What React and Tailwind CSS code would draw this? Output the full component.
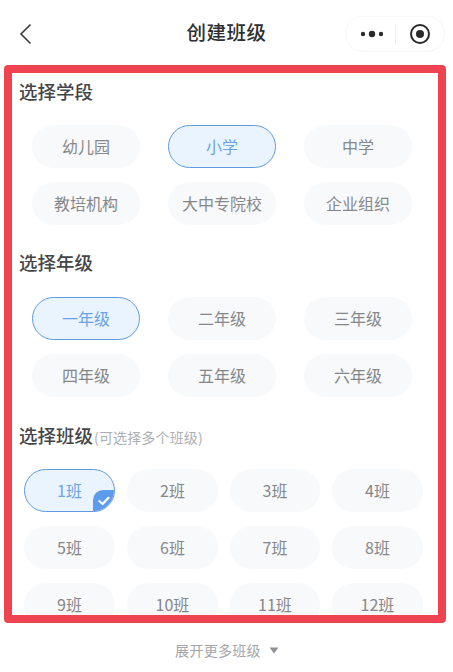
import React from "react";

const font = { fontFamily: '"Noto Sans CJK SC", "Noto Sans", sans-serif' };

function Chip({ label, active, check }) {
  return (
    <div
      className={`relative h-[43px] rounded-[22px] flex items-center justify-center text-[16px] overflow-hidden pb-[2px] ${
        active
          ? "bg-[#eaf4fe] border-[1.5px] border-[#5f9ae0] text-[#6ba3e2]"
          : "bg-[#f8f9fa] text-[#85878a]"
      }`}
    >
      {label}
      {check && (
        <div className="absolute right-0 bottom-0 w-[21px] h-[21px] bg-[#5d9ceb] rounded-tl-[10px] flex items-center justify-center">
          <svg width="12" height="10" viewBox="0 0 12 10" fill="none">
            <path d="M1.5 5.2 L4.6 8 L10.5 1.8" stroke="#fff" strokeWidth="2.2" strokeLinecap="round" strokeLinejoin="round" />
          </svg>
        </div>
      )}
    </div>
  );
}

function Title({ children, sub, className }) {
  return (
    <div className={`flex items-end h-[26px] pl-[7px] pb-[1px] ${className}`}>
      <span className="text-[18.5px] leading-[26px] font-medium text-[#444548]">{children}</span>
      {sub && <span className="ml-[1px] text-[14px] tracking-[0.15px] leading-[22px] text-[#adafb2]">{sub}</span>}
    </div>
  );
}

function Grid3({ items, active }) {
  return (
    <div className="grid grid-cols-[108px_108px_108px] gap-x-[28px] gap-y-[14px] pl-[20px]">
      {items.map((t) => (
        <Chip key={t} label={t} active={t === active} />
      ))}
    </div>
  );
}

export default function App() {
  const classes = Array.from({ length: 12 }, (_, i) => `${i + 1}班`);
  return (
    <div className="w-[453px] h-[672px] bg-white overflow-hidden flex flex-col" style={font}>
      <header className="relative h-[65px] shrink-0 flex items-center justify-center">
        <svg className="absolute left-[19px] top-[23px]" width="13" height="22" viewBox="0 0 13 22" fill="none">
          <path d="M11.5 1.5 L2 11 L11.5 20.5" stroke="#3a3a3a" strokeWidth="1.6" />
        </svg>
        <span className="text-[19.5px] font-medium text-[#2e2f31] tracking-[0.5px] -mt-[1px]">创建班级</span>
        <div className="absolute left-[345px] top-[16px] w-[100px] h-[36px] rounded-[18px] border border-[#f6f6f6] flex items-center">
          <svg className="ml-[14px]" width="24" height="8" viewBox="0 0 24 8">
            <circle cx="3" cy="4" r="2.2" fill="#2a2a2a" />
            <circle cx="12" cy="4" r="3.2" fill="#2a2a2a" />
            <circle cx="21" cy="4" r="2.2" fill="#2a2a2a" />
          </svg>
          <div className="ml-[11px] w-px h-[20px] bg-[#eeeeee]" />
          <svg className="ml-[13px]" width="22" height="22" viewBox="0 0 22 22" fill="none">
            <circle cx="11" cy="11" r="9" stroke="#2a2a2a" strokeWidth="2" />
            <circle cx="11" cy="11" r="4" fill="#2a2a2a" />
          </svg>
        </div>
      </header>

      <main className="ml-[4px] w-[442px] h-[558px] shrink-0 border-[8px] border-[#ef4350] rounded-[4px] overflow-hidden bg-white">
        <Title className="mt-[6px]">选择学段</Title>
        <div className="mt-[20px]">
          <Grid3 items={["幼儿园", "小学", "中学", "教培机构", "大中专院校", "企业组织"]} active="小学" />
        </div>
        <Title className="mt-[25px]">选择年级</Title>
        <div className="mt-[21px]">
          <Grid3 items={["一年级", "二年级", "三年级", "四年级", "五年级", "六年级"]} active="一年级" />
        </div>
        <Title sub="(可选择多个班级)" className="mt-[26px]">选择班级</Title>
        <div className="mt-[20px] grid grid-cols-[91px_91px_90px_91px] gap-x-[12px] gap-y-[14px] pl-[12px]">
          {classes.map((t, i) => (
            <Chip key={t} label={t} active={i === 0} check={i === 0} />
          ))}
        </div>
      </main>

      <div className="h-[49px] pt-[5px] flex items-center justify-center gap-[8px] pl-[1px] text-[14px] text-[#a3a5a8] tracking-[0.3px]">
        <span>展开更多班级</span>
        <svg width="10" height="7" viewBox="0 0 10 7">
          <path d="M0.5 0.5 H9.5 L5 6.5 Z" fill="#8f9194" />
        </svg>
      </div>
    </div>
  );
}
